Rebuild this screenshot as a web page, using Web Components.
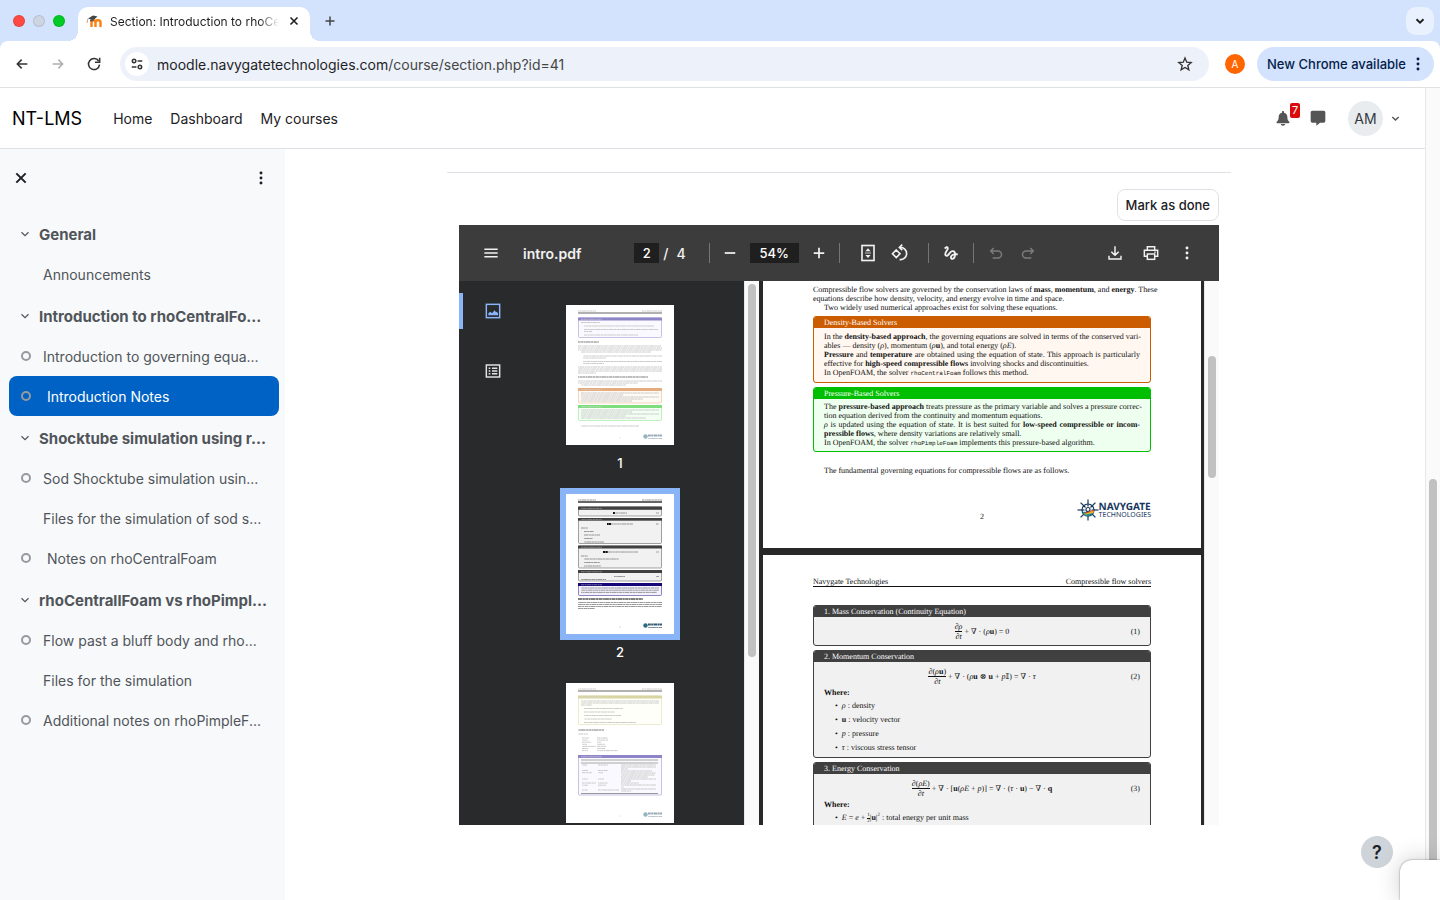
<!DOCTYPE html>
<html lang="en">
<head>
<meta charset="utf-8">
<title>Section: Introduction to rhoCentralFoam</title>
<style>
    html, body {
        margin: 0;
        height: 100%;
        overflow: hidden;
    }
    body {
        font-family: Inter, "Liberation Sans", Arial, sans-serif;
        font-size: 14px;
        color: #1d2125;
        background: #fff;
    }
</style>
</head>
<body>
<browser-window>
    <tab-strip slot="chrome">Section: Introduction to rhoCentralFoam</tab-strip>
    <address-bar slot="chrome"></address-bar>
    <lms-page></lms-page>
</browser-window>

<script>
const ICONS = {
    back: '<path d="M20 12H5M11.5 5.5 5 12l6.5 6.5"/>',
    forward: '<path d="M4 12h15M12.5 5.5 19 12l-6.5 6.5"/>',
    reload: '<path d="M19 7.5A8.300 8.300 0 1 0 20.300 13"/><path d="M20.500 2.500v7h-7"/>',
    tune: '<circle cx="7" cy="7" r="3"/><path d="M13 7h8M3 17h8"/><circle cx="17" cy="17" r="3"/>',
    star: '<path d="m12 3 2.600 6.200 6.700.6-5.100 4.400 1.600 6.600L12 17.300l-5.800 3.500 1.600-6.600L2.700 9.800l6.700-.6z"/>',
    dots: '<g fill="currentColor" stroke="none"><circle cx="12" cy="4.500" r="2.200"/><circle cx="12" cy="12" r="2.200"/><circle cx="12" cy="19.500" r="2.200"/></g>',
    chevron: '<path d="m5 8.500 7 7 7-7"/>',
    close: '<path d="m5 5 14 14M19 5 5 19"/>',
    plus: '<path d="M12 3v18M3 12h18"/>',
    minus: '<path d="M3 12h18"/>',
    bell: '<path fill="currentColor" stroke="none" d="M12 1.500c.9 0 1.500.6 1.500 1.500v1c3.200.7 5 3.200 5 6.300 0 4 .8 5.400 2.800 7.200.9.900.4 2.200-.8 2.200h-17c-1.200 0-1.700-1.300-.8-2.200 2-1.800 2.800-3.200 2.800-7.200C5.500 7.200 7.300 4.700 10.500 4V3c0-.9.600-1.500 1.500-1.500zM8.800 21h6.400c0 1.600-1.400 2.600-3.200 2.600S8.800 22.600 8.800 21z"/>',
    chat: '<path fill="currentColor" stroke="none" d="M3.500 1h17A2.500 2.500 0 0 1 23 3.500v13a2.500 2.500 0 0 1-2.500 2.500H15l-5.500 4.500V19h-6A2.500 2.500 0 0 1 1 16.500v-13A2.500 2.500 0 0 1 3.500 1z"/>',
    menu: '<path d="M2 6.500h20M2 12h20M2 17.500h20"/>',
    fit: '<rect x="4" y="2" width="16" height="20"/><path fill="currentColor" stroke="none" d="m12 5.500 3.500 4h-7zM12 18.500l3.500-4h-7z"/><path stroke-width="1" d="M8 12h8"/>',
    rotate: '<path d="m7 8 5 5-5 5-5-5z"/><path d="M12 4.500a8.200 8.200 0 1 1-.5 16.300"/><path d="M15 .8 11.200 4.500 15 8.200"/>',
    draw: '<path fill="currentColor" stroke="none" d="M4.590 6.890c.7-.71 1.400-1.350 1.710-1.220.5.2 0 1.030-.3 1.520-.25.42-2.860 3.890-2.860 6.310 0 1.280.48 2.340 1.340 2.980.75.56 1.740.73 2.640.46 1.070-.31 1.950-1.400 3.060-2.770 1.210-1.490 2.830-3.440 4.080-3.440 1.630 0 1.650 1.010 1.760 1.790-3.780.64-5.380 3.670-5.380 5.370 0 1.700 1.440 3.090 3.210 3.090 1.630 0 4.290-1.330 4.690-6.100H21v-2.500h-2.470c-.15-1.650-1.090-4.200-4.030-4.200-2.250 0-4.180 1.910-4.940 2.840-.58.73-2.060 2.480-2.290 2.720-.25.3-.68.84-1.110.84-.45 0-.72-.83-.36-1.920.35-1.090 1.400-2.860 1.850-3.520.78-1.140 1.300-1.920 1.300-3.280C8.950 3.690 7.310 3 6.440 3 5.120 3 3.970 4 3.720 4.250c-.36.36-.66.66-.88.93l1.750 1.710zm9.290 11.660c-.31 0-.74-.26-.74-.72 0-.6.73-2.200 2.870-2.760-.3 2.690-1.430 3.480-2.130 3.480z"/>',
    undo: '<path d="M7 19.500h8a5 5 0 0 0 0-10.500H4M8.500 4.500 4 9l4.500 4.500"/>',
    redo: '<path d="M17 19.500H9A5 5 0 0 1 9 9h11M15.500 4.500 20 9l-4.500 4.500"/>',
    download: '<path d="M12 2v13M6.500 10l5.500 5.500 5.500-5.500M3 16v5h18v-5"/>',
    print: '<path d="M6.500 7.500V2.500h11v5M6.500 17H2V8h20v9h-4.500"/><rect x="6.500" y="13.500" width="11" height="8"/><path d="M17 11h2"/>',
    image: '<rect x="2" y="2" width="20" height="20"/><path fill="currentColor" stroke="none" d="M5 18.500v-3l3-2.500 2.500 2.500L14.500 11l2 3 1-1 2 2.500v3z"/>',
    outline: '<rect x="2" y="3" width="20" height="18"/><path d="M5.500 8h2.500M10.500 8h8M5.500 12h2.500M10.500 12h8M5.500 16h2.500M10.500 16h8"/>'
};

class UiIcon extends HTMLElement {
    connectedCallback() {
        const shadowRoot = this.attachShadow({ mode: 'open' });
        shadowRoot.innerHTML = `
        <style>
            :host {
                display: inline-flex;
                flex: none;
                width: var(--icon-size, 16px);
                height: var(--icon-size, 16px);
            }
            svg {
                width: 100%;
                height: 100%;
                fill: none;
                stroke: currentColor;
                stroke-width: var(--icon-stroke, 2.2);
                overflow: visible;
            }
        </style>
        <svg viewBox="0 0 24 24" aria-hidden="true">${ICONS[this.getAttribute('name')]}</svg>
        `;
    }
}

// Decorative scroll bar: --before / --thumb / --after are proportions of the track
class ScrollTrack extends HTMLElement {
    connectedCallback() {
        const shadowRoot = this.attachShadow({ mode: 'open' });
        shadowRoot.innerHTML = `
        <style>
            :host {
                display: flex;
                flex-direction: column;
                align-items: center;
                flex: none;
                box-sizing: border-box;
                width: 15px;
                background: #fafafa;
                border-left: 1px solid #e8e8e8;
            }
            .before { flex: var(--before) 0 0; }
            .thumb {
                flex: var(--thumb) 0 0;
                width: 8px;
                border-radius: 4px;
                background: #c1c1c1;
            }
            .after { flex: var(--after) 0 0; }
        </style>
        <div class="before"></div><div class="thumb"></div><div class="after"></div>
        `;
    }
}

class BrowserWindow extends HTMLElement {
    connectedCallback() {
        const shadowRoot = this.attachShadow({ mode: 'open' });
        shadowRoot.innerHTML = `
        <style>
            :host {
                display: flex;
                flex-direction: column;
                height: 100vh;
            }
            .chrome {
                flex: none;
                background: #d3e2fd;
                border-bottom: 1px solid #dfe1e5;
            }
            .page {
                display: flex;
                flex: 1;
                min-height: 0;
            }
            ::slotted(lms-page) { flex: 1; min-width: 0; }
            scroll-track { --before: 391; --thumb: 421; --after: 0; }
            /* corner of a chat popup, over the scroll bar */
            .popup {
                position: fixed;
                right: 0;
                bottom: 0;
                width: 40px;
                height: 40px;
                border-top-left-radius: 12px;
                background: #fff;
                box-shadow: 0 0 2px rgba(0, 0, 0, 0.5), 0 0 24px rgba(0, 0, 0, 0.2);
            }
        </style>
        <div class="chrome"><slot name="chrome"></slot></div>
        <div class="page"><slot></slot><scroll-track></scroll-track></div>
        <div class="popup"></div>
        `;
    }
}

class TabStrip extends HTMLElement {
    connectedCallback() {
        const shadowRoot = this.attachShadow({ mode: 'open' });
        shadowRoot.innerHTML = `
        <style>
            :host {
                display: flex;
                align-items: flex-end;
                height: 41px;
                padding: 0 6px 0 13px;
                color: #1f1f1f;
            }
            .lights {
                display: flex;
                align-items: center;
                gap: 8px;
                height: 41px;
                margin-right: 3px;
            }
            .lights i {
                width: 12px;
                height: 12px;
                box-sizing: border-box;
                border-radius: 50%;
                border: 1px solid rgba(0, 0, 0, 0.1);
                background: #cdd4e2;
            }
            .lights .red { background: #ff4a43; }
            .lights .green { background: #00cb24; }
            .curve { width: 10px; height: 10px; flex: none; }
            .left { background: radial-gradient(circle at 0 0, transparent 10px, #fff 10px); }
            .right { background: radial-gradient(circle at 100% 0, transparent 10px, #fff 10px); }
            .tab {
                display: flex;
                align-items: center;
                gap: 7px;
                box-sizing: border-box;
                width: 232px;
                height: 34px;
                padding: 0 8px 6px;
                border-radius: 10px 10px 0 0;
                background: #fff;
                font-size: 12px;
            }
            .tab svg { width: 17px; height: 16px; flex: none; }
            .title {
                flex: 1;
                overflow: hidden;
                white-space: nowrap;
                -webkit-mask-image: linear-gradient(90deg, #000 88%, transparent);
                mask-image: linear-gradient(90deg, #000 88%, transparent);
            }
            button {
                display: flex;
                align-items: center;
                justify-content: center;
                padding: 0;
                border: none;
                background: none;
                color: inherit;
            }
            .close { width: 16px; height: 28px; --icon-size: 12px; --icon-stroke: 3.2; }
            .new { width: 20px; height: 41px; --icon-size: 12px; --icon-stroke: 3; color: #444; }
            .search {
                width: 28px;
                height: 28px;
                margin: 0 0 6px auto;
                border-radius: 10px;
                background: #e9f1fe;
                --icon-size: 12px;
                --icon-stroke: 3.8;
            }
        </style>
        <div class="lights"><i class="red"></i><i></i><i class="green"></i></div>
        <i class="curve left"></i>
        <div class="tab">
            <svg viewBox="0 0 17 16" aria-hidden="true">
                <path d="M5.5 14V9.500c0-3 4-3 4 0V14M9.500 9.500c0-3 5-3 5 0V14" fill="none" stroke="#f98012" stroke-width="2.400"/>
                <path d="m2 5.500 5-3 4.500 1L7.500 7z" fill="#444"/><path d="M2 5.500 1 10" stroke="#c9a27c"/><path d="M4 6.500v2l3.500-.5V6z" fill="#555"/>
            </svg>
            <span class="title"><slot></slot></span>
            <button class="close" aria-label="Close tab"><ui-icon name="close"></ui-icon></button>
        </div>
        <i class="curve right"></i>
        <button class="new" aria-label="New tab"><ui-icon name="plus"></ui-icon></button>
        <button class="search" aria-label="Search tabs"><ui-icon name="chevron"></ui-icon></button>
        `;
    }
}

class AddressBar extends HTMLElement {
    connectedCallback() {
        const shadowRoot = this.attachShadow({ mode: 'open' });
        shadowRoot.innerHTML = `
        <style>
            :host {
                display: flex;
                align-items: center;
                height: 46px;
                padding: 0 6px 0 4px;
                border-radius: 8px 8px 0 0;
                background: #fff;
                color: #333;
            }
            button {
                display: flex;
                align-items: center;
                justify-content: center;
                padding: 0;
                border: none;
                background: none;
                color: inherit;
                font: inherit;
            }
            .nav { width: 36px; height: 34px; --icon-stroke: 2.3; }
            .nav[disabled] { color: #b0b0b0; }
            .url {
                display: flex;
                align-items: center;
                flex: 1;
                height: 34px;
                margin-left: 8px;
                padding: 0 12px 0 5px;
                border-radius: 17px;
                background: #edf1fa;
            }
            .site {
                width: 24px;
                height: 24px;
                margin-right: 8px;
                border-radius: 50%;
                background: #fff;
                --icon-size: 14px;
                --icon-stroke: 2.6;
            }
            .url span { flex: 1; color: #454746; }
            .url b { font-weight: 400; color: #1f1f1f; }
            .star { width: 24px; height: 24px; --icon-stroke: 2; }
            .profile {
                width: 20px;
                height: 20px;
                margin: 0 12px 0 16px;
                border-radius: 50%;
                background: #ff6500;
                color: #fff;
                font-size: 10px;
            }
            .update {
                gap: 4px;
                height: 34px;
                padding: 0 8px 0 10px;
                border-radius: 17px;
                background: #d3e2fd;
                color: #041e49;
                font-size: 13px;
                font-weight: 500;
            }
        </style>
        <button class="nav" aria-label="Back"><ui-icon name="back"></ui-icon></button>
        <button class="nav" aria-label="Forward" disabled><ui-icon name="forward"></ui-icon></button>
        <button class="nav" aria-label="Reload"><ui-icon name="reload"></ui-icon></button>
        <div class="url">
            <button class="site" aria-label="Site information"><ui-icon name="tune"></ui-icon></button>
            <span><b>moodle.navygatetechnologies.com</b>/course/section.php?id=41</span>
            <button class="star" aria-label="Bookmark"><ui-icon name="star"></ui-icon></button>
        </div>
        <button class="profile">A</button>
        <button class="update">New Chrome available <ui-icon name="dots"></ui-icon></button>
        `;
    }
}

class LmsPage extends HTMLElement {
    connectedCallback() {
        const shadowRoot = this.attachShadow({ mode: 'open' });
        shadowRoot.innerHTML = `
        <style>
            :host {
                display: flex;
                flex-direction: column;
                min-height: 0;
            }
            .body {
                display: flex;
                flex: 1;
                min-height: 0;
            }
            main {
                display: flex;
                flex: 1;
                justify-content: center;
                align-items: flex-start;
                min-width: 0;
                padding: 23px 32px 0 0;
            }
            .activity {
                box-sizing: border-box;
                width: 100%;
                min-width: 0;
                max-width: 784px;
                padding: 16px 12px 0;
                border-top: 1px solid #dee2e6;
            }
            .actions {
                display: flex;
                justify-content: flex-end;
                margin-bottom: 4px;
            }
            .done {
                height: 32px;
                padding: 0 8px;
                border: 1px solid #dee2e6;
                border-radius: 8px;
                background: #fff;
                color: #1d2125;
                font: 500 13px Inter, "Liberation Sans", sans-serif;
            }
            .help {
                position: fixed;
                right: 47px;
                bottom: 32px;
                width: 32px;
                height: 32px;
                padding: 0;
                border: none;
                border-radius: 50%;
                background: #ced4da;
                color: #1d2125;
                font: 600 18px Inter, "Liberation Sans", sans-serif;
            }
        </style>
        <site-header></site-header>
        <div class="body">
            <course-index></course-index>
            <main>
                <div class="activity">
                    <div class="actions"><button class="done">Mark as done</button></div>
                    <pdf-viewer></pdf-viewer>
                </div>
            </main>
        </div>
        <button class="help">?</button>
        `;
    }
}

class SiteHeader extends HTMLElement {
    connectedCallback() {
        const shadowRoot = this.attachShadow({ mode: 'open' });
        shadowRoot.innerHTML = `
        <style>
            :host {
                display: flex;
                align-items: center;
                flex: none;
                height: 60px;
                padding: 0 24px 0 12px;
                border-bottom: 1px solid #dee2e6;
                background: #fff;
            }
            a { color: #1d2125; text-decoration: none; }
            .brand { margin-right: 31px; font-size: 18px; color: #000; }
            nav { display: flex; gap: 18px; flex: 1; }
            button {
                display: flex;
                align-items: center;
                justify-content: center;
                padding: 0;
                border: none;
                background: none;
                color: #555;
                font: inherit;
            }
            .bell { position: relative; width: 35px; height: 35px; }
            .count {
                position: absolute;
                left: 25px;
                top: 2px;
                width: 10px;
                height: 15px;
                border-radius: 2px;
                background: #d90b0b;
                color: #fff;
                font-size: 11px;
                line-height: 15px;
                text-align: center;
            }
            .chat { width: 35px; height: 35px; margin-right: 13px; }
            .user { gap: 7px; --icon-size: 11px; --icon-stroke: 3; }
            .avatar {
                width: 35px;
                height: 35px;
                border-radius: 50%;
                background: #e9ecef;
                color: #343a40;
                line-height: 35px;
            }
        </style>
        <a class="brand" href="#">NT-LMS</a>
        <nav>
            <a href="#">Home</a>
            <a href="#">Dashboard</a>
            <a href="#">My courses</a>
        </nav>
        <button class="bell" aria-label="Notifications"><ui-icon name="bell"></ui-icon><span class="count">7</span></button>
        <button class="chat" aria-label="Messages"><ui-icon name="chat"></ui-icon></button>
        <button class="user"><span class="avatar">AM</span><ui-icon name="chevron"></ui-icon></button>
        `;
    }
}

class CourseIndex extends HTMLElement {
    connectedCallback() {
        const shadowRoot = this.attachShadow({ mode: 'open' });
        shadowRoot.innerHTML = `
        <style>
            :host {
                display: block;
                flex: none;
                box-sizing: border-box;
                width: 285px;
                padding: 0 6px 0 9px;
                background: #f8f9fb;
                color: #50555a;
            }
            header {
                display: flex;
                align-items: center;
                justify-content: space-between;
                height: 58px;
                padding: 0 10px 0 4px;
                margin-bottom: 7px;
            }
            button {
                display: flex;
                padding: 0;
                border: none;
                background: none;
                color: #1d2125;
            }
            .close { --icon-stroke: 3; }
        </style>
        <header>
            <button class="close" aria-label="Close course index"><ui-icon name="close"></ui-icon></button>
            <button aria-label="Course index options"><ui-icon name="dots"></ui-icon></button>
        </header>
        <index-section label="General">
            <index-item>Announcements</index-item>
        </index-section>
        <index-section label="Introduction to rhoCentralFo...">
            <index-item todo>Introduction to governing equa...</index-item>
            <index-item todo active>&nbsp;Introduction Notes</index-item>
        </index-section>
        <index-section label="Shocktube simulation using r...">
            <index-item todo>Sod Shocktube simulation usin...</index-item>
            <index-item>Files for the simulation of sod s...</index-item>
            <index-item todo>&nbsp;Notes on rhoCentralFoam</index-item>
        </index-section>
        <index-section label="rhoCentrallFoam vs rhoPimpl...">
            <index-item todo>Flow past a bluff body and rho...</index-item>
            <index-item>Files for the simulation</index-item>
            <index-item todo>Additional notes on rhoPimpleF...</index-item>
        </index-section>
        `;
    }
}

class IndexSection extends HTMLElement {
    connectedCallback() {
        const shadowRoot = this.attachShadow({ mode: 'open' });
        shadowRoot.innerHTML = `
        <style>
            :host { display: block; margin-bottom: 2px; }
            .head {
                display: flex;
                align-items: center;
                height: 40px;
                padding-left: 10px;
                gap: 8px;
                white-space: nowrap;
            }
            button {
                display: flex;
                width: 12px;
                padding: 0;
                border: none;
                background: none;
                color: inherit;
                --icon-size: 12px;
                --icon-stroke: 2.4;
            }
            a { color: inherit; font-weight: 700; font-size: 15px; text-decoration: none; }
        </style>
        <div class="head">
            <button aria-label="Collapse"><ui-icon name="chevron"></ui-icon></button>
            <a href="#">${this.getAttribute('label')}</a>
        </div>
        <slot></slot>
        `;
    }
}

class IndexItem extends HTMLElement {
    connectedCallback() {
        const shadowRoot = this.attachShadow({ mode: 'open' });
        shadowRoot.innerHTML = `
        <style>
            :host {
                display: flex;
                align-items: center;
                height: 40px;
                padding-left: 12px;
                gap: 12px;
                border-radius: 8px;
                white-space: nowrap;
            }
            :host([active]) { background: #0062c4; color: #fff; }
            i {
                box-sizing: border-box;
                width: 10px;
                height: 10px;
            }
            :host([todo]) i { border: 2px solid #979a9d; border-radius: 50%; }
            a { color: inherit; text-decoration: none; }
        </style>
        <i></i><a href="#"><slot></slot></a>
        `;
    }
}

class PdfViewer extends HTMLElement {
    connectedCallback() {
        const shadowRoot = this.attachShadow({ mode: 'open' });
        shadowRoot.innerHTML = `
        <style>
            :host {
                display: flex;
                flex-direction: column;
                height: 600px;
                background: #282828;
            }
            .panes { display: flex; flex: 1; min-height: 0; }
            .tabs {
                display: flex;
                flex-direction: column;
                flex: none;
                width: 68px;
                padding-top: 12px;
                gap: 24px;
                background: #282a2c;
            }
            .tabs button {
                display: flex;
                align-items: center;
                justify-content: center;
                box-sizing: border-box;
                height: 36px;
                padding: 0 4px 0 0;
                border: none;
                border-left: 4px solid transparent;
                background: none;
                color: #e3e3e3;
            }
            .tabs .on { border-color: #8ab4f8; color: #8ab4f8; }
            .thumbs {
                display: flex;
                flex-direction: column;
                align-items: center;
                flex: none;
                box-sizing: border-box;
                width: 217px;
                padding: 18px 31px 0 0;
                overflow: hidden;
                background: #282a2c;
            }
            .doc {
                display: flex;
                flex-direction: column;
                flex: 1;
                gap: 7px;
                min-width: 0;
                padding: 0 3px 0 4px;
                overflow: hidden;
            }
            .left { --before: 3; --thumb: 373; --after: 168; }
            .right { --before: 75; --thumb: 122; --after: 347; }
        </style>
        <pdf-toolbar></pdf-toolbar>
        <div class="panes">
            <div class="tabs">
                <button class="on" aria-label="Thumbnails"><ui-icon name="image"></ui-icon></button>
                <button aria-label="Document outline"><ui-icon name="outline"></ui-icon></button>
            </div>
            <div class="thumbs">
                <pdf-thumbnail page="1">1</pdf-thumbnail>
                <pdf-thumbnail page="2" selected>2</pdf-thumbnail>
                <pdf-thumbnail page="3"></pdf-thumbnail>
            </div>
            <scroll-track class="left"></scroll-track>
            <div class="doc">
                <solver-page></solver-page>
                <equation-page></equation-page>
            </div>
            <scroll-track class="right"></scroll-track>
        </div>
        `;
    }
}

class PdfToolbar extends HTMLElement {
    connectedCallback() {
        const shadowRoot = this.attachShadow({ mode: 'open' });
        shadowRoot.innerHTML = `
        <style>
            :host {
                display: flex;
                align-items: center;
                flex: none;
                height: 56px;
                background: #3c3c3c;
                color: #f1f1f1;
                font-weight: 600;
                --icon-size: 16px;
            }
            .start, .end {
                display: flex;
                align-items: center;
                flex: 1 0 0;
            }
            .start { gap: 16px; padding-left: 16px; }
            .end { justify-content: flex-end; gap: 4px; padding-right: 16px; }
            .middle, .group { display: flex; align-items: center; }
            .divider { width: 1px; height: 20px; background: #757575; }
            button {
                display: flex;
                align-items: center;
                justify-content: center;
                width: 32px;
                height: 32px;
                padding: 0;
                border: none;
                background: none;
                color: inherit;
            }
            button[disabled] { color: #7c7c7c; }
            input {
                box-sizing: border-box;
                height: 20px;
                padding: 0;
                border: none;
                background: #1f1f1f;
                color: #fff;
                font: 500 13px Inter, "Liberation Sans", sans-serif;
                text-align: center;
            }
            .page { gap: 4px; padding-right: 23px; font-weight: 500; }
            .page input { width: 25px; }
            .page span + span { margin-left: 4px; }
            .zoom { gap: 4px; padding: 0 4px; --icon-size: 14px; --icon-stroke: 3; }
            .zoom input { width: 49px; }
            .view { padding: 0 12px; --icon-size: 18px; }
            .ink { padding: 0 6px; --icon-size: 18px; }
            .history { padding-left: 6px; }
        </style>
        <div class="start">
            <button aria-label="Menu"><ui-icon name="menu"></ui-icon></button>
            <span>intro.pdf</span>
        </div>
        <div class="middle">
            <div class="group page"><input aria-label="Page number" value="2"><span>/</span><span>4</span></div>
            <i class="divider"></i>
            <div class="group zoom">
                <button aria-label="Zoom out"><ui-icon name="minus"></ui-icon></button>
                <input aria-label="Zoom level" value="54%">
                <button aria-label="Zoom in"><ui-icon name="plus"></ui-icon></button>
            </div>
            <i class="divider"></i>
            <div class="group view">
                <button aria-label="Fit to page"><ui-icon name="fit"></ui-icon></button>
                <button aria-label="Rotate"><ui-icon name="rotate"></ui-icon></button>
            </div>
            <i class="divider"></i>
            <div class="group ink"><button aria-label="Draw"><ui-icon name="draw"></ui-icon></button></div>
            <i class="divider"></i>
            <div class="group history">
                <button aria-label="Undo" disabled><ui-icon name="undo"></ui-icon></button>
                <button aria-label="Redo" disabled><ui-icon name="redo"></ui-icon></button>
            </div>
        </div>
        <div class="end">
            <button aria-label="Download"><ui-icon name="download"></ui-icon></button>
            <button aria-label="Print"><ui-icon name="print"></ui-icon></button>
            <button aria-label="More"><ui-icon name="dots"></ui-icon></button>
        </div>
        `;
    }
}

// Thumbnails: rows of text are too small to read, so they are dashed strokes
const row = (x1, x2, y, color = '#8c8c8c', w = 0.9) =>
    `<path d="M${x1} ${y}H${x2}" stroke="${color}" stroke-width="${w}" stroke-dasharray="3.300 .4 1.600 .3 4.700 .4 2.200 .4" stroke-dashoffset="${(y * 7 + x1) % 13}"/>`;
const rows = (x1, ends, y, step, color) =>
    ends.map((end, i) => row(x1, end, y + i * step, color)).join('');
const frame = (y, h, head, color, fill) => `
    <rect x="12.500" y="${y}" width="83" height="${h}" rx="1" fill="${fill}" stroke="${color}" stroke-width=".8" stroke-opacity=".6"/>
    <rect x="12" y="${y - 0.5}" width="84" height="${head + 0.5}" fill="${color}"/>
    ${row(15, 36, y + head / 2, '#aaa', 0.6)}`;
const pageEdges = `
    ${row(12, 30, 6)}${row(76, 96, 6)}<path d="M12 8H96" stroke="#666" stroke-width="1.800"/>
    <circle cx="79.500" cy="131.500" r="2.200" fill="#2b6c80"/>${row(82, 96, 130.5, '#345873', 2)}${row(82, 96, 133.5, '#789', 1)}
    ${row(53.5, 54.5, 133)}`;

const THUMBS = {
    1: `${pageEdges}
        ${frame(13, 19.5, 2.5, '#1d0d93', '#f6f4ff')}${row(15, 34, 17.5)}${row(18, 88, 21)}${row(18, 92, 24.5)}${row(18, 26, 26.5)}${row(18, 72, 30)}
        ${row(12, 33, 37, '#555', 1.4)}${rows(12, [95, 96, 96], 41, 2)}${row(15, 85, 47)}${row(17, 96, 51)}${row(17, 40, 53)}${row(17, 96, 56.5)}${row(17, 38, 58.5)}${rows(12, [96, 96, 96, 30], 62, 2)}
        ${row(12, 82, 72, '#555', 1.4)}${rows(12, [96, 72], 76, 2)}${row(15, 60, 80)}
        ${frame(83.5, 14.5, 2.5, '#cc5c00', '#fff4ea')}${rows(15, [93, 57, 93, 77, 66], 88, 2)}
        ${frame(100.5, 15, 2.5, '#00bf00', '#eaffea')}${rows(15, [93, 66, 93, 60, 80], 105, 2)}
        ${row(15, 73, 121)}`,
    2: `${pageEdges}
        ${frame(13, 9, 2.8, '#404040', '#f1f1f1')}${row(47, 61, 19)}${row(47, 49, 19, '#111', 2)}${row(90, 93, 19)}
        ${frame(24.5, 25, 2.2, '#404040', '#f1f1f1')}${row(41, 67, 30)}${row(41, 45, 30, '#111', 2)}${row(90, 93, 30)}${row(15, 22, 34)}${rows(18, [28, 34, 27, 38], 37.5, 3.5)}
        ${frame(52, 22, 2.5, '#404040', '#f1f1f1')}${row(37, 72, 58)}${row(37, 42, 58, '#111', 2)}${row(90, 93, 58)}${row(15, 22, 62)}${rows(18, [53, 34, 35], 65, 3.5)}
        ${frame(76.5, 10.5, 2.5, '#404040', '#f1f1f1')}${row(48, 59, 82.5)}${row(90, 93, 82.5)}${row(15, 40, 85.5)}
        ${frame(89.5, 12, 2.5, '#150778', '#f3f1ff')}${rows(15, [93, 93, 91], 94, 2.2)}
        ${row(12, 77, 105, '#555', 1.4)}${rows(12, [96, 96, 96, 29], 108.5, 2)}`,
    3: `${pageEdges}
        ${frame(13, 28.5, 2.5, '#b0ac44', '#fffff4')}${rows(15, [93, 93, 26], 18, 2)}${rows(18, [57, 49, 55, 46, 70], 25.5, 3.5)}
        ${row(12, 38, 47, '#555', 1.4)}${row(12, 22, 51)}${rows(16, [23, 22, 25, 21, 30, 22, 22], 55, 2.1)}${rows(31, [42, 42, 35, 39, 40, 39, 52], 55, 2.1)}
        ${frame(72.5, 39.5, 2.5, '#1d0d93', '#f6f5ff')}
        <path d="M15 77H92M15 80H92" stroke="#888" stroke-width="1.500"/>
        ${row(16, 21, 82)}${rows(16, [22, 26], 87.5, 2.2)}${row(16, 22, 96)}${rows(16, [30, 22], 100, 2.2)}${row(16, 22, 107)}
        ${row(32, 42, 82)}${rows(32, [42, 37], 87.5, 2.2)}${row(32, 38, 96)}${rows(32, [42, 40], 100, 2.2)}${row(32, 53, 107)}
        ${rows(55, [90, 90, 62, 86, 90, 89, 82, 90, 65, 73, 90, 58, 90, 65], 82, 2)}
        <path d="M15 110.500H92" stroke="#333"/>`
};

class PdfThumbnail extends HTMLElement {
    connectedCallback() {
        const page = this.getAttribute('page');
        const shadowRoot = this.attachShadow({ mode: 'open' });
        shadowRoot.innerHTML = `
        <style>
            :host {
                display: block;
                flex: none;
                margin-bottom: 13px;
                color: #fff;
                font-size: 13px;
                font-weight: 500;
                line-height: 24px;
                text-align: center;
            }
            button {
                display: block;
                padding: 0;
                border: 6px solid transparent;
                background: none;
            }
            svg {
                display: block;
                width: 108px;
                height: 140px;
                background: #fff;
            }
            g { opacity: 0.5; }
            :host([selected]) button { border-color: #8ab4f8; }
            :host([selected]) g { opacity: 1; }
        </style>
        <button aria-label="Page ${page}"><svg viewBox="0 0 108 140"><g>${THUMBS[page]}</g></svg></button>
        <slot></slot>
        `;
    }
}

// Styles shared by the typeset pages
const PAPER = `
    :host {
        display: block;
        flex: none;
        padding: 0 50px;
        background: #fff;
        color: #111;
        font: 8px/9px "Liberation Serif", "DejaVu Serif", serif;
        text-rendering: geometricPrecision;
        white-space: nowrap;
    }
    p { margin: 0; }
    .full { text-align: justify; text-align-last: justify; }
    .indent { padding-left: 11px; }
    code { font: 6px/8px "Liberation Mono", monospace; }
`;

class TitledBox extends HTMLElement {
    connectedCallback() {
        const shadowRoot = this.attachShadow({ mode: 'open' });
        shadowRoot.innerHTML = `
        <style>
            :host {
                display: block;
                margin-top: 4px;
                overflow: hidden;
                border: 1px solid var(--frame, #404040);
                border-radius: 3px;
                background: var(--fill, #f1f1f1);
            }
            header {
                padding: 0 10px;
                background: var(--frame, #404040);
                color: #fff;
                line-height: 11px;
            }
            .content { padding: var(--pad, 2px) 10px; }
        </style>
        <header>${this.getAttribute('label')}</header>
        <div class="content"><slot></slot></div>
        `;
    }
}

class SolverPage extends HTMLElement {
    connectedCallback() {
        const shadowRoot = this.attachShadow({ mode: 'open' });
        shadowRoot.innerHTML = `
        <style>
            ${PAPER}
            :host { padding-top: 4px; padding-bottom: 27px; }
            .density { --frame: #cc5c00; --fill: #fff7f0; --pad: 4px; }
            .pressure { --frame: #00bf00; --fill: #efffef; --pad: 3px; }
            .after { margin-top: 14px; }
            footer {
                display: grid;
                grid-template-columns: 1fr auto 1fr;
                align-items: end;
                margin-top: 24px;
            }
            navygate-logo { grid-column: 3; justify-self: end; }
            footer span { grid-column: 2; }
        </style>
        <p class="full">Compressible flow solvers are governed by the conservation laws of <b>mass</b>, <b>momentum</b>, and <b>energy</b>. These</p>
        <p>equations describe how density, velocity, and energy evolve in time and space.</p>
        <p class="indent">Two widely used numerical approaches exist for solving these equations.</p>
        <titled-box class="density" label="Density-Based Solvers">
            <p class="full">In the <b>density-based approach</b>, the governing equations are solved in terms of the conserved vari-</p>
            <p>ables — density (<i>ρ</i>), momentum (<i>ρ</i><b>u</b>), and total energy (<i>ρE</i>).</p>
            <p class="full"><b>Pressure</b> and <b>temperature</b> are obtained using the equation of state. This approach is particularly</p>
            <p>effective for <b>high-speed compressible flows</b> involving shocks and discontinuities.</p>
            <p>In OpenFOAM, the solver <code>rhoCentralFoam</code> follows this method.</p>
        </titled-box>
        <titled-box class="pressure" label="Pressure-Based Solvers">
            <p class="full">The <b>pressure-based approach</b> treats pressure as the primary variable and solves a pressure correc-</p>
            <p>tion equation derived from the continuity and momentum equations.</p>
            <p class="full"><i>ρ</i> is updated using the equation of state. It is best suited for <b>low-speed compressible or incom-</b></p>
            <p><b>pressible flows</b>, where density variations are relatively small.</p>
            <p>In OpenFOAM, the solver <code>rhoPimpleFoam</code> implements this pressure-based algorithm.</p>
        </titled-box>
        <p class="indent after">The fundamental governing equations for compressible flows are as follows.</p>
        <footer><span>2</span><navygate-logo></navygate-logo></footer>
        `;
    }
}

class EquationPage extends HTMLElement {
    connectedCallback() {
        const shadowRoot = this.attachShadow({ mode: 'open' });
        shadowRoot.innerHTML = `
        <style>
            ${PAPER}
            :host { padding-top: 22px; padding-bottom: 60px; }
            .running {
                display: flex;
                justify-content: space-between;
                margin-bottom: 18px;
                border-bottom: 1px solid #111;
            }
            .eq {
                display: grid;
                grid-template-columns: 1fr auto 1fr;
                align-items: center;
                height: 24px;
            }
            .eq > :first-child { grid-column: 2; display: flex; align-items: center; white-space: pre; }
            .eq > :last-child { justify-self: end; }
            .frac { display: inline-block; text-align: center; }
            .frac > span { display: block; }
            .frac > span + span { border-top: 1px solid #111; }
            .half { display: inline-block; vertical-align: middle; font-size: 5px; line-height: 5px; }
            .half > span { display: block; }
            .half > span + span { border-top: 1px solid #111; }
            sup { font-size: 5px; line-height: 1px; }
            ul { margin: 2px 0 0; padding: 0 0 0 11px; list-style: none; }
            li { height: 14px; line-height: 14px; }
            li::before { content: "•"; margin-right: 4px; }
        </style>
        <header class="running"><span>Navygate Technologies</span><span>Compressible flow solvers</span></header>
        <titled-box label="1. Mass Conservation (Continuity Equation)">
            <div class="eq"><div><span class="frac"><span><i>∂ρ</i></span><span><i>∂t</i></span></span> + ∇ · (<i>ρ</i><b>u</b>) = 0</div><span>(1)</span></div>
        </titled-box>
        <titled-box label="2. Momentum Conservation">
            <div class="eq"><div><span class="frac"><span><i>∂</i>(<i>ρ</i><b>u</b>)</span><span><i>∂t</i></span></span> + ∇ · (<i>ρ</i><b>u</b> ⊗ <b>u</b> + <i>p</i>𝕀) = ∇ · <i>τ</i></div><span>(2)</span></div>
            <p><b>Where:</b></p>
            <ul>
                <li><i>ρ</i> : density</li>
                <li><b>u</b> : velocity vector</li>
                <li><i>p</i> : pressure</li>
                <li><i>τ</i> : viscous stress tensor</li>
            </ul>
        </titled-box>
        <titled-box label="3. Energy Conservation">
            <div class="eq"><div><span class="frac"><span><i>∂</i>(<i>ρE</i>)</span><span><i>∂t</i></span></span> + ∇ · [<b>u</b>(<i>ρE</i> + <i>p</i>)] = ∇ · (<i>τ</i> · <b>u</b>) − ∇ · <b>q</b></div><span>(3)</span></div>
            <p><b>Where:</b></p>
            <ul>
                <li><i>E</i> = <i>e</i> + <span class="half"><span>1</span><span>2</span></span>|<b>u</b>|<sup>2</sup> : total energy per unit mass</li>
            </ul>
        </titled-box>
        `;
    }
}

class NavygateLogo extends HTMLElement {
    connectedCallback() {
        const spokes = [0, 45, 90, 135, 180, 225, 270, 315]
            .map(a => `<path d="M11 .5V7.500" transform="rotate(${a} 11 11)"/>`).join('');
        const shadowRoot = this.attachShadow({ mode: 'open' });
        shadowRoot.innerHTML = `
        <style>
            :host {
                display: flex;
                align-items: center;
                color: #17375e;
                font-family: "Noto Sans", "Open Sans", sans-serif;
            }
            svg { width: 22px; height: 22px; }
            strong { display: block; font-size: 10px; line-height: 12px; }
            span { display: block; font-size: 7px; line-height: 8px; }
        </style>
        <svg viewBox="0 0 22 22" aria-hidden="true">
            <circle cx="11" cy="11" r="6" fill="#fff"/>
            <g fill="none" stroke="#17375e" stroke-width="1.200">
                ${spokes}<circle cx="11" cy="11" r="6"/><circle cx="11" cy="10.500" r="2"/>
            </g>
            <path d="M5.500 13c4-1 7 1 11 0-1 5-10 6-11 0z" fill="#1a8a94"/>
            <path d="M7 14.500c4 .5 6-3 10-3l-.5 2.500c-3.500 0-5 2-9 1.500z" fill="#f2b31b"/>
            <path d="M7.500 13.500c4 0 6-2.500 9.500-2.500v1c-3.500 0-5 2-8.500 2.200z" fill="#dc3b26"/>
        </svg>
        <div><strong>NAVYGATE</strong><span>TECHNOLOGIES</span></div>
        `;
    }
}

customElements.define("ui-icon", UiIcon);
customElements.define("scroll-track", ScrollTrack);
customElements.define("browser-window", BrowserWindow);
customElements.define("tab-strip", TabStrip);
customElements.define("address-bar", AddressBar);
customElements.define("lms-page", LmsPage);
customElements.define("site-header", SiteHeader);
customElements.define("course-index", CourseIndex);
customElements.define("index-section", IndexSection);
customElements.define("index-item", IndexItem);
customElements.define("pdf-viewer", PdfViewer);
customElements.define("pdf-toolbar", PdfToolbar);
customElements.define("pdf-thumbnail", PdfThumbnail);
customElements.define("titled-box", TitledBox);
customElements.define("solver-page", SolverPage);
customElements.define("equation-page", EquationPage);
customElements.define("navygate-logo", NavygateLogo);
</script>
</body>
</html>
